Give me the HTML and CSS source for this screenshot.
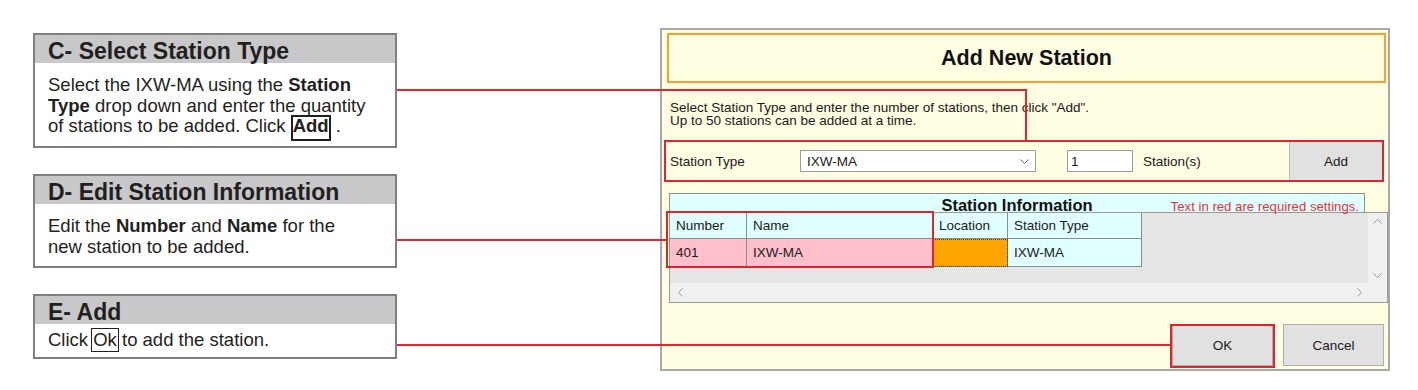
FILE: index.html
```html
<!DOCTYPE html>
<html lang="en">
<head>
    <meta charset="UTF-8">
    <title>Add New Station</title>
    <link rel="stylesheet" href="styles.css">
</head>
<body>
    <div class="page">
        <!-- Step descriptions -->
        <div class="steps">
            <div class="step">
                <div class="step-head">C- Select Station Type</div>
                <div class="step-body">
                    Select the IXW-MA using the <b>Station</b><br>
                    <b>Type</b> drop down and enter the quantity<br>
                    of stations to be added. Click <span class="key">Add</span> .
                </div>
            </div>
            <div class="step">
                <div class="step-head">D- Edit Station Information</div>
                <div class="step-body">
                    Edit the <b>Number</b> and <b>Name</b> for the<br>
                    new station to be added.
                </div>
            </div>
            <div class="step step-short">
                <div class="step-head">E- Add</div>
                <div class="step-body">Click <span class="key key-thin">Ok</span> to add the station.</div>
            </div>
        </div>

        <!-- Dialog screenshot -->
        <div class="dialog">
            <div class="dialog-title">Add New Station</div>
            <div class="intro">
                Select Station Type and enter the number of stations, then click "Add".<br>
                Up to 50 stations can be added at a time.
            </div>
            <div class="type-row">
                <span class="type-label">Station Type</span>
                <div class="select">
                    <span>IXW-MA</span>
                    <svg width="9" height="5" viewBox="0 0 9 5"><polyline points="0.5,0.5 4.5,4.5 8.5,0.5" fill="none" stroke="#666" stroke-width="1"/></svg>
                </div>
                <input class="qty" type="text" value="1">
                <span class="unit">Station(s)</span>
                <button class="btn add-btn">Add</button>
            </div>

            <div class="grid">
                <div class="grid-caption">
                    <span class="caption-title">Station Information</span>
                    <span class="caption-note">Text in red are required settings.</span>
                </div>
                <div class="grid-body">
                    <div class="grid-view">
                        <table class="stations">
                            <colgroup>
                                <col style="width:77px">
                                <col style="width:186px">
                                <col style="width:75px">
                                <col style="width:134px">
                            </colgroup>
                            <tr class="head-row">
                                <td>Number</td>
                                <td>Name</td>
                                <td>Location</td>
                                <td>Station Type</td>
                            </tr>
                            <tr class="data-row">
                                <td class="required">401</td>
                                <td class="required">IXW-MA</td>
                                <td class="focused"></td>
                                <td>IXW-MA</td>
                            </tr>
                        </table>
                    </div>
                    <div class="vscroll">
                        <svg width="9" height="5" viewBox="0 0 9 5"><polyline points="0.5,4.5 4.5,0.5 8.5,4.5" fill="none" stroke="#9a9a9a"/></svg>
                        <svg width="9" height="5" viewBox="0 0 9 5"><polyline points="0.5,0.5 4.5,4.5 8.5,0.5" fill="none" stroke="#9a9a9a"/></svg>
                    </div>
                    <div class="hscroll">
                        <svg width="5" height="9" viewBox="0 0 5 9"><polyline points="4.5,0.5 0.5,4.5 4.5,8.5" fill="none" stroke="#9a9a9a"/></svg>
                        <svg width="5" height="9" viewBox="0 0 5 9"><polyline points="0.5,0.5 4.5,4.5 0.5,8.5" fill="none" stroke="#9a9a9a"/></svg>
                    </div>
                    <div class="corner"></div>
                </div>
            </div>

            <div class="dialog-actions">
                <button class="btn">OK</button>
                <button class="btn">Cancel</button>
            </div>
        </div>
    </div>

    <!-- Red callout lines over the page -->
    <svg class="callouts" width="1418" height="390">
        <g fill="none" stroke="#e1252f" stroke-width="2">
            <polyline points="397,90 1026,90 1026,140"/>
            <rect x="665" y="141" width="718" height="40"/>
            <line x1="397" y1="240" x2="667" y2="240"/>
            <rect x="667" y="212" width="266" height="55"/>
            <line x1="397" y1="345" x2="1171" y2="345"/>
            <rect x="1171" y="325" width="103" height="42"/>
        </g>
    </svg>
</body>
</html>
```

FILE: styles.css
```css
/* Page */
body {
    margin: 0;
    width: 1418px;
    height: 390px;
    position: relative;
    overflow: hidden;
    background: #fff;
    font-family: "Liberation Sans", Arial, sans-serif;
}

.page {
    display: flex;
    align-items: flex-start;
    gap: 263px;
    padding: 28px 0 0 33px;
}

/* Step boxes on the left */
.steps {
    width: 364px;
    margin-top: 5px;
    display: flex;
    flex-direction: column;
    gap: 26px;
}

.step {
    border: 2px solid #7f7f7f;
    color: #231f20;
}

.step-head {
    height: 24px;
    padding: 4px 0 0 13px;
    line-height: 24px;
    font-size: 23px;
    font-weight: bold;
    background: #c8c8ca;
}

.step-body {
    padding: 12px 12px 9px 13px;
    font-size: 18.5px;
    line-height: 20.5px;
}

.step-short .step-body {
    padding: 6px 12px 6px 13px;
}

.key {
    display: inline-block;
    border: 2px solid #231f20;
    padding: 0 0 4px;
    margin: -4px 0;
    line-height: 18px;
    font-weight: bold;
}

.key-thin {
    border-width: 1px;
    padding: 0 1px;
    margin: -4px -2px -4px -2px;
    line-height: 22px;
    font-weight: normal;
}

/* Dialog */
.dialog {
    width: 730px;
    height: 343px;
    box-sizing: border-box;
    border: 2px solid #a8a8a8;
    background: #fffde2;
    padding: 3px 0 0 5px;
    font-size: 13.5px;
    color: #1a1a1a;
}

.dialog-title {
    height: 50px;
    box-sizing: border-box;
    margin-right: 2px;
    border: 2px solid #f5a033;
    display: flex;
    align-items: center;
    justify-content: center;
    font-size: 21.5px;
    font-weight: bold;
    color: #111;
}

.intro {
    margin-top: 18px;
    padding-left: 3px;
    line-height: 13px;
}

.type-row {
    display: flex;
    align-items: center;
    height: 38px;
    margin: 15px 6px 0 3px;
}

.type-label {
    width: 130px;
}

.select {
    width: 236px;
    height: 22px;
    box-sizing: border-box;
    border: 1px solid #9c9c9c;
    background: #fff;
    display: flex;
    align-items: center;
    justify-content: space-between;
    padding: 0 6px;
}

.qty {
    margin: 0 0 0 31px;
    width: 66px;
    height: 22px;
    box-sizing: border-box;
    border: 1px solid #9c9c9c;
    padding: 0 3px;
    font: inherit;
    color: inherit;
    outline: none;
}

.unit {
    margin-left: 10px;
}

.btn {
    width: 101px;
    height: 42px;
    background: #e1e1e1;
    border: 1px solid #adadad;
    font: inherit;
    color: #1a1a1a;
    padding: 0;
}

.add-btn {
    margin-left: auto;
    width: 93px;
    height: 38px;
    border: none;
    border-left: 1px solid #bdbdbd;
}

/* Station information grid */
.grid {
    margin: 13px 0 0 2px;
}

.grid-caption {
    width: 696px;
    height: 19px;
    box-sizing: border-box;
    border: 1px solid #8f8f8f;
    border-bottom: none;
    background: #e0ffff;
    display: grid;
    grid-template-columns: 1fr auto 1fr;
    align-items: baseline;
    padding: 3px 5px 0;
    line-height: 1;
}

.caption-title {
    grid-column: 2;
    font-size: 16.5px;
    font-weight: bold;
    color: #111;
}

.caption-note {
    grid-column: 3;
    justify-self: end;
    font-size: 13.2px;
    color: #e8303a;
}

.grid-body {
    height: 91px;
    box-sizing: border-box;
    border: 1px solid #9a9a9a;
    background: #e5e5e5;
    display: grid;
    grid-template-columns: 1fr 19px;
    grid-template-rows: 1fr 19px;
}

.stations {
    table-layout: fixed;
    width: 472px;
    border-collapse: separate;
    border-spacing: 0;
}

.stations td {
    padding: 0 0 0 6px;
    border-right: 1px solid #8c8c8c;
    border-bottom: 1px solid #8c8c8c;
    background: #e0ffff;
    white-space: nowrap;
}

.head-row td {
    line-height: 25px;
}

.data-row td {
    line-height: 27px;
}

.stations td.required {
    background: #ffc0cb;
}

.stations td.focused {
    background: #ffa500;
    outline: 1px dotted #444;
    outline-offset: -1px;
}

.vscroll {
    background: #f0f0f0;
    display: flex;
    flex-direction: column;
    justify-content: space-between;
    align-items: center;
    padding: 6px 0 5px;
}

.hscroll {
    background: #f0f0f0;
    display: flex;
    justify-content: space-between;
    align-items: center;
    padding: 0 6px 0 8px;
}

.corner {
    background: #f0f0f0;
}

.dialog-actions {
    display: flex;
    justify-content: flex-end;
    gap: 10px;
    margin: 21px 4px 0 0;
}

/* Red callouts */
.callouts {
    position: absolute;
    top: 0;
    left: 0;
    pointer-events: none;
}
```
